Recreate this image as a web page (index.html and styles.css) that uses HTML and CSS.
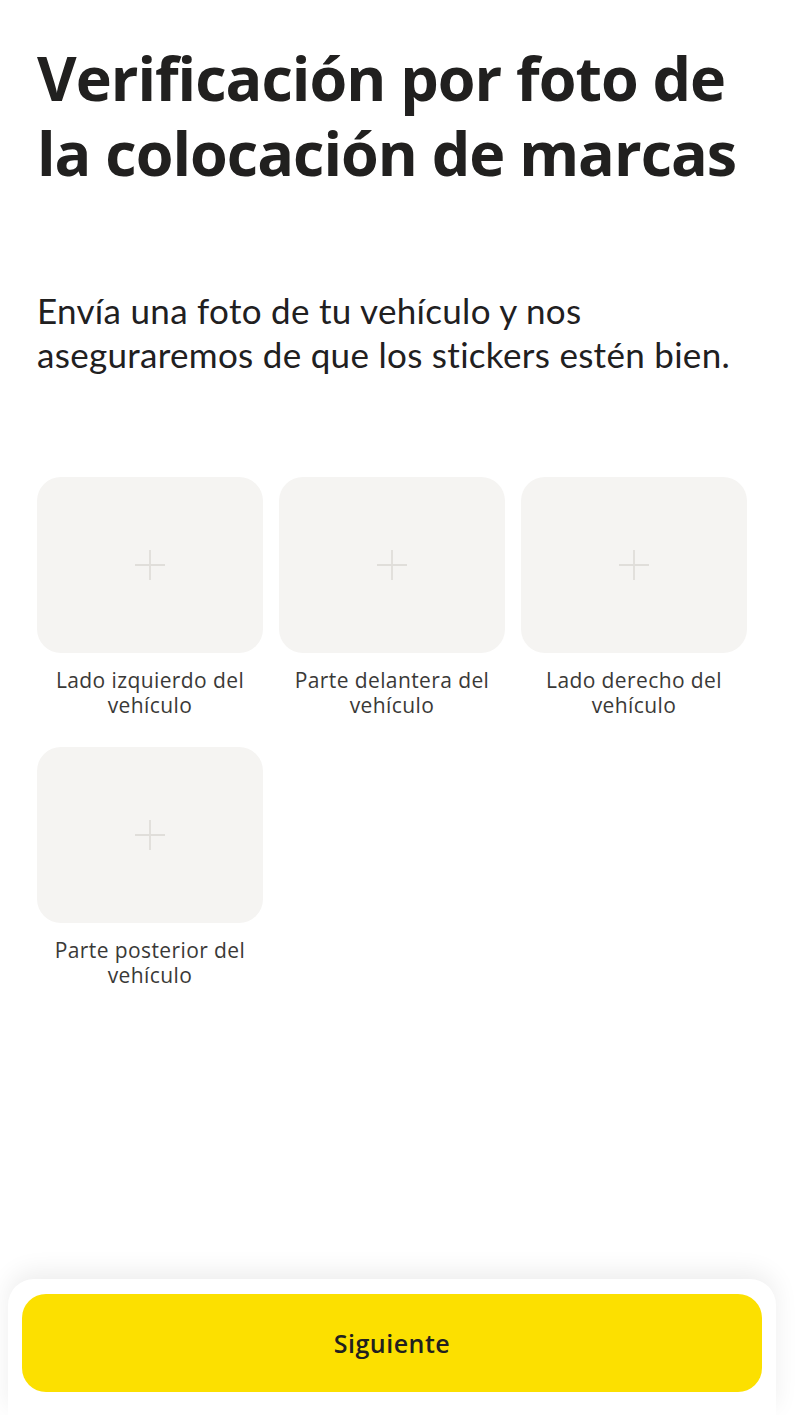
FILE: index.html
```html
<!DOCTYPE html>
<html lang="es">
<head>
<meta charset="utf-8">
<link rel="stylesheet" href="styles.css">
</head>
<body>
<div class="screen">
  <main class="content">
    <h1 class="title">Verificación por foto de la colocación de marcas</h1>
    <p class="subtitle">Envía una foto de tu vehículo y nos aseguraremos de que los stickers estén bien.</p>
    <div class="grid">
      <div class="item">
        <div class="tile"><svg class="plus" viewBox="0 0 32 32"><path d="M16 1v30M1 16h30"/></svg></div>
        <div class="label">Lado izquierdo del vehículo</div>
      </div>
      <div class="item">
        <div class="tile"><svg class="plus" viewBox="0 0 32 32"><path d="M16 1v30M1 16h30"/></svg></div>
        <div class="label">Parte delantera del vehículo</div>
      </div>
      <div class="item">
        <div class="tile"><svg class="plus" viewBox="0 0 32 32"><path d="M16 1v30M1 16h30"/></svg></div>
        <div class="label">Lado derecho del vehículo</div>
      </div>
      <div class="item">
        <div class="tile"><svg class="plus" viewBox="0 0 32 32"><path d="M16 1v30M1 16h30"/></svg></div>
        <div class="label">Parte posterior del vehículo</div>
      </div>
    </div>
  </main>
  <footer class="panel">
    <button class="btn">Siguiente</button>
  </footer>
</div>
</body>
</html>
```
FILE: styles.css
```css
* { box-sizing: border-box; }
html, body { margin: 0; padding: 0; background: #fff; }
body { font-family: "Open Sans", "Noto Sans", sans-serif; color: #21201f; }
.screen { width: 800px; height: 1415px; display: flex; flex-direction: column; overflow: hidden; }
.content { flex: 1; padding: 40px 30px 0 37px; }
.title { margin: 0; font-size: 61px; line-height: 75px; font-weight: 700; letter-spacing: -1px; color: #21201f; }
.subtitle { margin: 98px 0 0; max-width: 722px; font-family: Lato, "Open Sans", sans-serif; font-size: 35px; line-height: 44px; font-weight: 400; letter-spacing: 0.3px; color: #21201f; }
.grid { margin-top: 101px; display: grid; grid-template-columns: repeat(3, 226px); column-gap: 16px; row-gap: 29px; }
.item { display: flex; flex-direction: column; align-items: center; }
.tile { width: 226px; height: 176px; border-radius: 24px; background: #f5f4f2; display: flex; align-items: center; justify-content: center; }
.plus { width: 32px; height: 32px; fill: none; stroke: #e0deda; stroke-width: 1.8; }
.label { margin-top: 15px; font-size: 21px; line-height: 25px; text-align: center; color: #3a3937; letter-spacing: 0.4px; }
.panel { margin: 0 24px 0 8px; padding: 15px 14px 23px; background: #fff; border-radius: 26px 26px 0 0; box-shadow: 0 -8px 24px rgba(0,0,0,0.07); }
.btn { width: 100%; height: 98px; border: 0; border-radius: 24px; background: #fce000; font-family: "Open Sans", "Noto Sans", sans-serif; font-size: 25px; font-weight: 600; color: #21201f; letter-spacing: 0.5px; }
```
